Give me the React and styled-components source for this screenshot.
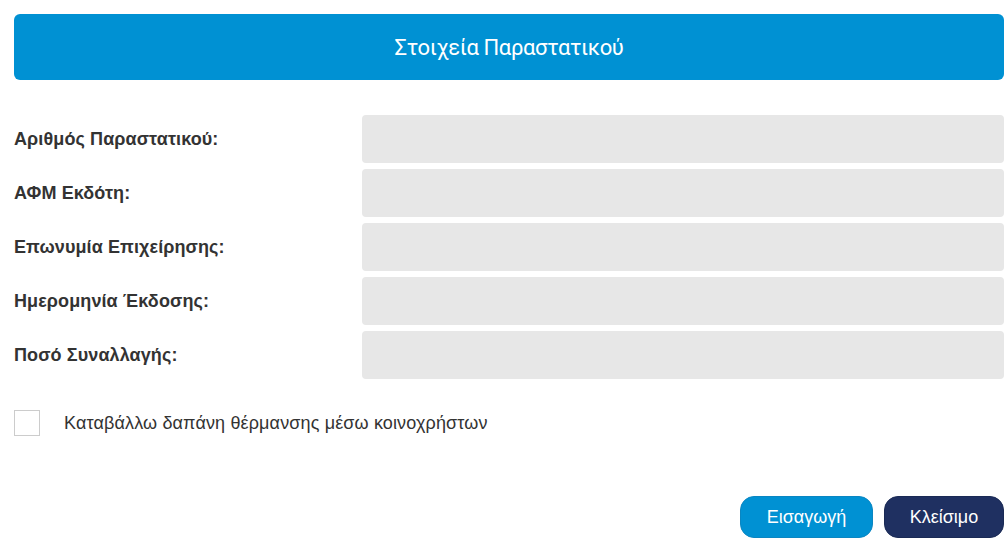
import React, { useState } from "react";
import styled, { createGlobalStyle } from "styled-components";

const GlobalStyle = createGlobalStyle`
  html, body {
    margin: 0;
    padding: 0;
    background: #ffffff;
  }
  * {
    box-sizing: border-box;
  }
`;

const Dialog = styled.div`
  width: 1005px;
  height: 549px;
  padding: 14px 1px 0 14px;
  display: flex;
  flex-direction: column;
  font-family: "Liberation Sans", Arial, sans-serif;
  color: #333333;
`;

const Header = styled.div`
  height: 66px;
  border-radius: 6px;
  background-color: #0091d3;
  display: flex;
  align-items: center;
  justify-content: center;
  color: #ffffff;
  font-family: Roboto, "Liberation Sans", sans-serif;
  font-size: 22px;
  letter-spacing: -0.4px;
`;

const Form = styled.div`
  margin-top: 35px;
  display: flex;
  flex-direction: column;
  gap: 6px;
`;

const Row = styled.div`
  display: grid;
  grid-template-columns: 348px 1fr;
  align-items: center;
`;

const Label = styled.label`
  font-size: 18px;
  font-weight: bold;
  letter-spacing: 0.1px;
  color: #333333;
`;

const Field = styled.input`
  height: 48px;
  border: none;
  border-radius: 4px;
  background-color: #e7e7e7;
  outline: none;
  padding: 0 12px;
  font-size: 16px;
  font-family: inherit;
`;

const CheckRow = styled.label`
  margin-top: 31px;
  display: flex;
  align-items: center;
  gap: 24px;
  font-size: 18px;
  letter-spacing: 0.14px;
  color: #333333;
  cursor: pointer;
`;

const Box = styled.span`
  width: 26px;
  height: 26px;
  border: 1px solid #cccccc;
  background: ${(p) => (p.$checked ? "#0091d3" : "#ffffff")};
  display: inline-block;
`;

const Actions = styled.div`
  margin-top: 60px;
  display: flex;
  justify-content: flex-end;
  gap: 11px;
`;

const Button = styled.button`
  height: 42px;
  width: ${(p) => (p.$dark ? "120px" : "133px")};
  padding: 0;
  border-radius: 14px;
  border: 1px solid ${(p) => (p.$dark ? "#1a2a55" : "#0a86c2")};
  background-color: ${(p) => (p.$dark ? "#1f3061" : "#0091d3")};
  color: #ffffff;
  font-family: "Liberation Sans", Arial, sans-serif;
  font-size: 18px;
  cursor: pointer;
`;

const fields = [
  "Αριθμός Παραστατικού:",
  "ΑΦΜ Εκδότη:",
  "Επωνυμία Επιχείρησης:",
  "Ημερομηνία Έκδοσης:",
  "Ποσό Συναλλαγής:",
];

const App = () => {
  const [checked, setChecked] = useState(false);

  return (
    <>
      <GlobalStyle />
      <Dialog>
        <Header>Στοιχεία Παραστατικού</Header>

        <Form>
          {fields.map((f) => (
            <Row key={f}>
              <Label>{f}</Label>
              <Field type="text" />
            </Row>
          ))}
        </Form>

        <CheckRow onClick={() => setChecked(!checked)}>
          <Box $checked={checked} />
          Καταβάλλω δαπάνη θέρμανσης μέσω κοινοχρήστων
        </CheckRow>

        <Actions>
          <Button>Εισαγωγή</Button>
          <Button $dark>Κλείσιμο</Button>
        </Actions>
      </Dialog>
    </>
  );
};

export default App;
